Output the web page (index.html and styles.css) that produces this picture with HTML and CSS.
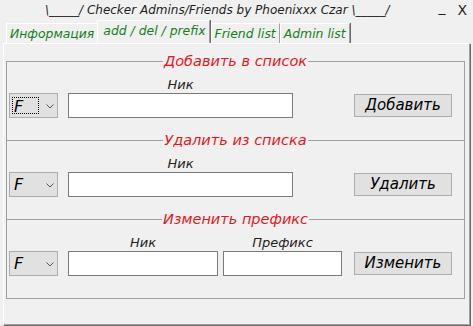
FILE: index.html
```html
<!DOCTYPE html>
<html lang="ru">
<head>
  <meta charset="UTF-8" />
  <title>Checker Admins/Friends</title>
  <link rel="stylesheet" href="styles.css">
</head>
<body>
  <div class="window">

    <!-- Title bar -->
    <div class="titlebar">
      <span class="title">\_____/ Checker Admins/Friends by Phoenixxx Czar \_____/</span>
      <span class="ctrl min">_</span>
      <span class="ctrl close">X</span>
    </div>

    <!-- Tabs -->
    <div class="tabs">
      <div class="tab">Информация</div>
      <div class="tab selected">add / del / prefix</div>
      <div class="tab">Friend list</div>
      <div class="tab">Admin list</div>
    </div>

    <div class="panel">
      <div class="groups">

        <div class="legend first"><span>Добавить в список</span></div>
        <div class="row">
          <div class="combo"><span class="focus">F</span><svg class="chev" width="8" height="5" viewBox="0 0 8 5"><polyline points="0.5,0.5 4,4 7.5,0.5" fill="none" stroke="#555" stroke-width="1"/></svg></div>
          <div class="field wide">
            <div class="label">Ник</div>
            <div class="input"></div>
          </div>
          <div class="btn">Добавить</div>
        </div>

        <div class="legend"><span>Удалить из списка</span></div>
        <div class="row">
          <div class="combo"><span class="val">F</span><svg class="chev" width="8" height="5" viewBox="0 0 8 5"><polyline points="0.5,0.5 4,4 7.5,0.5" fill="none" stroke="#555" stroke-width="1"/></svg></div>
          <div class="field wide">
            <div class="label">Ник</div>
            <div class="input"></div>
          </div>
          <div class="btn">Удалить</div>
        </div>

        <div class="legend"><span>Изменить префикс</span></div>
        <div class="row last">
          <div class="combo"><span class="val">F</span><svg class="chev" width="8" height="5" viewBox="0 0 8 5"><polyline points="0.5,0.5 4,4 7.5,0.5" fill="none" stroke="#555" stroke-width="1"/></svg></div>
          <div class="field nick">
            <div class="label">Ник</div>
            <div class="input"></div>
          </div>
          <div class="field prefix">
            <div class="label">Префикс</div>
            <div class="input"></div>
          </div>
          <div class="btn btn-change">Изменить</div>
        </div>

      </div>
    </div>
  </div>
</body>
</html>
```

FILE: styles.css
```css
body {
  margin: 0;
  background: #f0f0f0;
  font-family: "DejaVu Sans", Verdana, sans-serif;
  font-style: italic;
  color: #1e1e1e;
  overflow: hidden;
}
.window {
  width: 473px;
  height: 326px;
  display: flex;
  flex-direction: column;
}

/* Title bar */
.titlebar {
  height: 20px;
  display: flex;
  align-items: center;
  font-size: 12px;
}
.title {
  margin-left: 45px;
  flex: 1;
}
.ctrl {
  font-style: normal;
  font-size: 14px;
}
.min {
  margin-right: 12px;
  position: relative;
  top: -3px;
}
.close {
  margin-right: 6px;
}

/* Tabs */
.tabs {
  height: 23px;
  display: flex;
  align-items: flex-end;
  padding-left: 6px;
}
.tab {
  height: 19px;
  line-height: 19px;
  padding: 0 3px 0 3px;
  font-size: 12.4px;
  color: #13801a;
  border-left: 1px solid #fff;
  border-top: 1px solid #fff;
  border-right: 1px solid #a0a0a0;
  box-shadow: 1px 0 0 #696969;
}
.tab.selected {
  height: 22px;
  line-height: 20px;
  padding: 0 3px 0 5px;
  margin-left: -1px;
  margin-right: 1px;
  background: #f0f0f0;
  position: relative;
  z-index: 1;
}

/* Tab page */
.panel {
  flex: 1;
  margin: 0 3px 1px 3px;
  padding: 8px 4px 0 2px;
  border-top: 1px solid #fff;
  border-left: 1px solid #fff;
  border-right: 1px solid #a0a0a0;
  border-bottom: 1px solid #a0a0a0;
  box-shadow: 1px 1px 0 #696969;
}
.groups {
  margin-top: 9px;
  display: flex;
  flex-direction: column;
  border: 1px solid #a0a0a0;
  border-top: none;
}

/* Group headers */
.legend {
  height: 18px;
  margin: 0 -1px;
  display: flex;
  align-items: center;
  font-size: 14.5px;
  color: #e3171c;
}
.legend.first {
  margin-top: -9px;
}
.legend::before,
.legend::after {
  content: "";
  flex: 1;
  height: 1px;
  background: #a0a0a0;
}
.legend span {
  padding: 0 1px;
  line-height: 18px;
}

/* Rows */
.row {
  display: flex;
  align-items: flex-end;
  padding-left: 2px;
  margin-top: 8px;
  margin-bottom: 13px;
}
.row.last {
  margin-bottom: 22px;
}
.field {
  display: flex;
  flex-direction: column;
  margin-left: 10px;
}
.label {
  height: 14px;
  line-height: 14px;
  margin-bottom: 1px;
  font-size: 13px;
  text-align: center;
}
.input {
  height: 23px;
  background: #fff;
  border: 1px solid #7a7a7a;
}
.wide .input { width: 223px; }
.nick .input { width: 148px; }
.prefix { margin-left: 5px; }
.prefix .input { width: 117px; }

.combo {
  width: 47px;
  height: 23px;
  background: #e1e1e1;
  border: 1px solid #adadad;
  position: relative;
  font-size: 16px;
  color: #000;
}
.combo .focus,
.combo .val {
  position: absolute;
  left: 2px;
  top: 3px;
  width: 27px;
  height: 17px;
  line-height: 17px;
  padding-left: 1px;
  box-sizing: border-box;
}
.combo .focus {
  border: 1px dotted #000;
}
.combo .val {
  padding-left: 2px;
}
.chev {
  position: absolute;
  left: 36px;
  top: 10px;
}

.btn {
  width: 96px;
  height: 21px;
  line-height: 21px;
  margin: 0 0 1px 61px;
  background: #e1e1e1;
  border: 1px solid #adadad;
  text-align: center;
  font-size: 15px;
  color: #000;
}
.btn-change {
  margin-left: 12px;
}
```
